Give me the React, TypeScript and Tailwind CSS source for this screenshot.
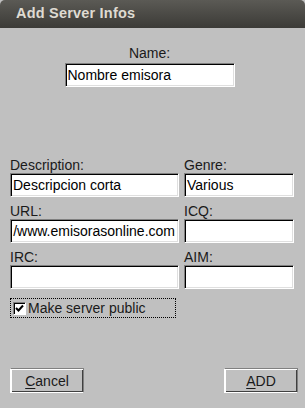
import React from "react";

const sunken =
  "border border-t-[#808080] border-l-[#808080] border-b-white border-r-white shadow-[inset_1px_1px_0_#000,inset_-1px_-1px_0_#dfdfdf] bg-white";

function Field({ value, className, end }: { value?: string; className?: string; end?: boolean }) {
  return (
    <div
      className={`${sunken} h-[24px] flex items-center overflow-hidden ${end ? "justify-end pr-[3px]" : "pl-[2px]"} ${className ?? ""}`}
    >
      <span className="whitespace-nowrap text-[14px] leading-[16px] text-black">{value}</span>
    </div>
  );
}

function Btn({ first, rest }: { first: string; rest: string }) {
  return (
    <div className="w-[74px] h-[25px] border border-t-[#808080] border-l-white border-b-white border-r-[#808080] shadow-[inset_1px_1px_0_#fff,inset_-1px_-1px_0_#404040] flex items-center justify-center text-[14px] leading-[16px] text-[#1a1a1a]">
      <span>
        <span className="underline underline-offset-2">{first}</span>
        {rest}
      </span>
    </div>
  );
}

export default function App() {
  return (
    <div
      className="w-[305px] h-[408px] bg-[#c0c0c0] flex flex-col"
      style={{ fontFamily: '"Liberation Sans", Arial, sans-serif' }}
    >
      <div className="h-[28px] shrink-0 rounded-t-[5px] bg-gradient-to-b from-[#5b5a55] to-[#3c3b37] flex items-center pl-[16px]">
        <span className="text-[14.5px] font-bold text-[#dfdbd2] tracking-[0.2px]">Add Server Infos</span>
      </div>
      <div className="flex-1 flex flex-col px-[10px] text-[14px] leading-[16px] text-[#1a1a1a]">
        <div className="mt-[17px] flex flex-col items-center pr-[6px]">
          <div className="h-[16px]">Name:</div>
          <Field value="Nombre emisora" className="mt-[2px] w-[170px]" />
        </div>
        <div className="mt-[70px] grid grid-cols-[169px_110px] gap-x-[5px]">
          <div className="h-[16px]">Description:</div>
          <div className="h-[16px]">Genre:</div>
          <Field value="Descripcion corta" />
          <Field value="Various" />
          <div className="h-[16px] mt-[6px]">URL:</div>
          <div className="h-[16px] mt-[6px]">ICQ:</div>
          <Field value="/www.emisorasonline.com" end />
          <Field />
          <div className="h-[16px] mt-[6px]">IRC:</div>
          <div className="h-[16px] mt-[6px]">AIM:</div>
          <Field />
          <Field />
        </div>
        <div className="mt-[9px] w-[166px] h-[20px] border border-dotted border-black flex items-center pl-[2px] gap-[2px]">
          <div className="w-[13px] h-[13px] border border-t-[#808080] border-l-[#808080] border-b-white border-r-white shadow-[inset_1px_1px_0_#000] bg-white flex items-center justify-center">
            <svg width="9" height="9" viewBox="0 0 9 9">
              <path d="M1 4 L3.5 6.5 L8 1.5" stroke="#000" strokeWidth="2" fill="none" />
            </svg>
          </div>
          <span>Make server public</span>
        </div>
        <div className="mt-[50px] flex justify-between mr-[-3px]">
          <Btn first="C" rest="ancel" />
          <Btn first="A" rest="DD" />
        </div>
      </div>
    </div>
  );
}
